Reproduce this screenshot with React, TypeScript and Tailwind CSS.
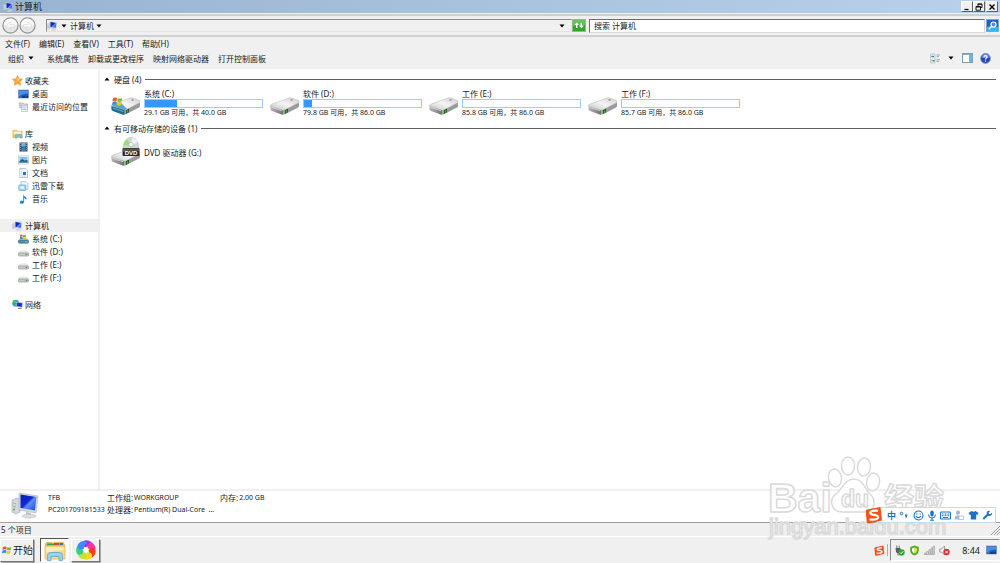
import React, { useState } from "react";

type IconProps = { className?: string };

function Caret({ className = "" }: IconProps) {
  return (
    <svg viewBox="0 0 6 4" className={`h-1 w-1.5 shrink-0 ${className}`}>
      <path d="M0.5 0.5h5L3 3.5z" fill="#000" />
    </svg>
  );
}

function WindowsFlag({ className = "" }: IconProps) {
  return (
    <svg viewBox="0 0 16 16" className={className}>
      <path d="M1.500 3.200C4 1.800 5.800 2 7.600 3L6.600 7.600C4.800 6.600 3 6.600.6 7.800z" fill="#ee5a24" />
      <path d="M8.600 3.400c2 1 4 .8 6.600-.4L14 7.600c-2.400 1.200-4.400 1.200-6.400.4z" fill="#7cbb2c" />
      <path d="M1 8.800c2.400-1.200 4.200-1.200 6-.2l-1 4.600c-1.800-1-3.800-1-6.200.2z" fill="#2f8de0" />
      <path d="M7.600 9c2 1 4 .8 6.400-.4l-1.200 4.800c-2.400 1-4.200 1-6.200 0z" fill="#fbc02d" />
    </svg>
  );
}

function ComputerIcon({ className = "" }: IconProps) {
  return (
    <svg viewBox="0 0 30 27" className={className}>
      <defs>
        <linearGradient id="screen" x1="0" y1="0" x2="1" y2="1">
          <stop offset="0" stopColor="#0a1fb8" />
          <stop offset="0.45" stopColor="#1028d0" />
          <stop offset="0.55" stopColor="#5f8ff5" />
          <stop offset="1" stopColor="#1b45dd" />
        </linearGradient>
      </defs>
      <path d="M1 8l5-2 3 1v13l-4 2-4-2z" fill="#d5d8db" stroke="#a3a8ad" strokeWidth=".6" />
      <path d="M2 11l3 1M2 14l3 1" stroke="#999" strokeWidth=".7" />
      <circle cx="3" cy="17.500" r="1" fill="#4caf50" />
      <path d="M8 1l19 3-2 17-17-3z" fill="#d8dde4" stroke="#a5adb8" strokeWidth=".6" />
      <path d="M9.500 2.500l16 2.500-1.600 13.600-14.400-2.600z" fill="url(#screen)" />
      <path d="M15 20l5 1v2.500l-5-1z" fill="#b9bec3" />
      <ellipse cx="18" cy="24.200" rx="7" ry="1.900" fill="#dcdfe1" stroke="#b2b6ba" strokeWidth=".5" />
    </svg>
  );
}

function DriveBody() {
  return (
    <>
      <defs>
        <linearGradient id="driveTop" x1="0" y1="1" x2="1" y2="0">
          <stop offset="0" stopColor="#c4c4c4" />
          <stop offset=".5" stopColor="#f4f4f4" />
          <stop offset="1" stopColor="#cfcfcf" />
        </linearGradient>
        <linearGradient id="driveFront" x1="0" y1="0" x2="1" y2="0">
          <stop offset="0" stopColor="#b5b5b5" />
          <stop offset=".6" stopColor="#8c8c8c" />
          <stop offset="1" stopColor="#6d6d6d" />
        </linearGradient>
      </defs>
      <path d="M.5 10.500l13 4.500v4.500q-1 .3-2 0L2 16q-1.500-.5-1.500-2z" fill="url(#driveFront)" />
      <path d="M13.500 15L29 7.500v3.500q0 1-1 1.600L15 19.300q-.8.300-1.500.2z" fill="#9b9b9b" />
      <path d="M.5 10.500q0-.8 1-1.200L19 3q1.500-.5 3 0l6.500 2.600q1.200.9 0 1.900L15.500 14.600q-1.500.8-3 .3L1.500 11.500q-1-.3-1-1z" fill="url(#driveTop)" stroke="#b4b4b4" strokeWidth=".5" />
      <path d="M21.500 4.200l2 .8-2 .7-1.800-.8z" fill="#8a8a8a" />
      <path d="M1.200 12.200l11 3.600" stroke="#e9e9e9" strokeWidth=".7" />
      <path d="M15 15.200l3-1.500v3.600l-3 1.500z" fill="#174b14" />
      <path d="M15.700 15.800l1.600-.8v2.200l-1.600.8z" fill="#3bbf28" />
    </>
  );
}

function DriveIcon({ system, className = "" }: IconProps & { system?: boolean }) {
  return (
    <svg viewBox="0 0 30 21" className={className}>
      <DriveBody />
      {system && (
        <>
          <path d="M.5 11l13 4v4.500q-1 .3-2 0L2 16q-1.500-.5-1.500-2z" fill="#1d6d92" />
          <path d="M1 10.500L9 7l7 7-2.500 1z" fill="#58a5c4" />
          <path d="M1.800 13l10.500 3.500" stroke="#8fd0e6" strokeWidth=".7" />
          <g transform="translate(1 1) scale(.68)">
            <path d="M1.500 3.200C4 1.800 5.800 2 7.600 3L6.600 7.600C4.800 6.600 3 6.600.6 7.800z" fill="#ee5a24" />
            <path d="M8.600 3.400c2 1 4 .8 6.600-.4L14 7.600c-2.400 1.200-4.400 1.200-6.400.4z" fill="#7cbb2c" />
            <path d="M1 8.800c2.400-1.200 4.200-1.200 6-.2l-1 4.600c-1.800-1-3.800-1-6.200.2z" fill="#2f8de0" />
            <path d="M8 9c2 1 4 .8 6.400-.4l-1.200 4.800c-2.400 1-4.200 1-6.200 0z" fill="#fbc02d" />
          </g>
        </>
      )}
    </svg>
  );
}

function DvdIcon() {
  return (
    <svg viewBox="0 0 30 30" className="h-[30px] w-[30px] shrink-0">
      <g transform="translate(0 9)">
        <DriveBody />
      </g>
      <path d="M12 14C12 5 15 .5 20 .5S28 5 28 14z" fill="#d3d6d6" stroke="#b9bcbc" strokeWidth=".6" />
      <path d="M20 9L12.500 8q1-4 3.500-5.500z" fill="#8fe36d" />
      <path d="M20 9l1-8q3.500.5 5.500 4z" fill="#f3f3f3" />
      <circle cx="20" cy="7.500" r="2.200" fill="#fff" stroke="#aaa" strokeWidth=".6" />
      <rect x="11.500" y="11" width="17" height="8" rx="1" fill="#2b2b2b" />
      <path d="M12 11.500h16v2.500q-8-1-16 1z" fill="#555" />
      <text x="20" y="17.600" fontSize="6" fontWeight="700" fontFamily="Liberation Sans, sans-serif" textAnchor="middle" fill="#fff">DVD</text>
    </svg>
  );
}

function SmallDrive() {
  return (
    <svg viewBox="0 0 11 10" className="h-2.5 w-[11px]">
      <path d="M2.500 4h6L10.500 6H.5z" fill="#f2f2f2" stroke="#c5c5c5" strokeWidth=".5" />
      <rect x=".5" y="6" width="10" height="3" rx=".8" fill="#c9c9c9" stroke="#8b8b8b" strokeWidth=".6" />
      <path d="M7.500 7.500h1.800" stroke="#2bb52b" strokeWidth="1" />
    </svg>
  );
}

function SmallSystemDrive() {
  return (
    <svg viewBox="0 0 11 10" className="h-2.5 w-[11px]">
      <path d="M2.500 3.500h6L10.500 6H.5z" fill="#b5dbe8" />
      <rect x=".5" y="6" width="10" height="3.200" rx=".8" fill="#4a90a8" stroke="#49646e" strokeWidth=".6" />
      <path d="M2 .8q1.400-.8 2.600 0v2q-1.200-.6-2.600 0z" fill="#ee5a24" />
      <path d="M5 1q1.400.6 2.800-.2v2q-1.400.8-2.800.2z" fill="#6fb52a" />
      <path d="M2 3.200q1.400-.8 2.600 0v2q-1.200-.6-2.600 0z" fill="#2f8de0" />
      <path d="M5 3.400q1.400.6 2.800-.2v2q-1.400.8-2.800.2z" fill="#fbb91d" />
      <path d="M7.500 7.700h1.800" stroke="#7bf04e" strokeWidth="1" />
    </svg>
  );
}

function StarIcon() {
  return (
    <svg viewBox="0 0 12 12" className="h-[11px] w-[11px]">
      <path d="M6 .6l1.600 3.500 3.900.5-2.800 2.700.7 3.900L6 9.300l-3.400 1.900.7-3.900L.5 4.600l3.900-.5z" fill="#fba93a" stroke="#e0862a" strokeWidth=".6" />
      <path d="M6 2.500l1 2.200 2 .4-3 1.200z" fill="#ffe08a" />
    </svg>
  );
}

function DesktopIcon({ className = "h-2.5 w-[11px]" }: IconProps) {
  return (
    <svg viewBox="0 0 11 10" className={className}>
      <rect x=".5" y="1" width="10" height="8" fill="#1c56b5" stroke="#6d8db5" strokeWidth=".7" />
      <path d="M1 1.400h9v3q-5 0-9 3z" fill="#4b8ce4" />
      <path d="M1 8h9" stroke="#0d2f6e" strokeWidth="1.200" />
      <path d="M1.500 8h2" stroke="#7fd1f2" strokeWidth=".8" />
    </svg>
  );
}

function RecentIcon() {
  return (
    <svg viewBox="0 0 11 10" className="h-2.5 w-[11px]">
      <path d="M1 1h4l1 1h3.500v4H2z" fill="#d6dade" stroke="#9aa0a6" strokeWidth=".6" />
      <path d="M3.500 4h6v5.500h-6z" fill="#f2f5f8" stroke="#a7b1ba" strokeWidth=".6" />
      <path d="M4.500 6h4M4.500 7.500h4" stroke="#7ba5cc" strokeWidth=".6" />
      <circle cx="3" cy="3.500" r="1.500" fill="#b7cbdd" />
    </svg>
  );
}

function LibraryIcon() {
  return (
    <svg viewBox="0 0 12 11" className="h-[11px] w-[11px]">
      <path d="M1 2h4l1 1h5v7H1z" fill="#f3d36e" stroke="#cfa945" strokeWidth=".6" />
      <path d="M2 3.500h8V6H2z" fill="#fff5c9" />
      <path d="M3.500 10.500V8q0-1.500 1.500-1.500h4.500q1.500 0 1.500 1.500v2.500H9V8.500H5.500v2z" fill="#7fc4e2" stroke="#4c9abc" strokeWidth=".5" />
    </svg>
  );
}

function VideoIcon() {
  return (
    <svg viewBox="0 0 11 10" className="h-2.5 w-[11px]">
      <rect x="1.500" y=".5" width="8" height="9" fill="#3f4a55" />
      <rect x="3.300" y="1" width="4.400" height="3.600" fill="#67b6e6" />
      <rect x="3.300" y="5.400" width="4.400" height="3.600" fill="#3a83c3" />
      <path d="M2.400 1v8M8.600 1v8" stroke="#dbe3ea" strokeWidth=".5" strokeDasharray="1 1" />
    </svg>
  );
}

function PictureIcon() {
  return (
    <svg viewBox="0 0 11 10" className="h-2.5 w-[11px]">
      <rect x=".5" y="1" width="10" height="8" fill="#fff" stroke="#a9b2ba" strokeWidth=".6" />
      <rect x="1.500" y="2" width="8" height="6" fill="#79c3ec" />
      <path d="M1.500 6l3-2 2 1.500L9.500 5v3h-8z" fill="#1d5f8c" />
      <path d="M1.500 7q4-1 8 0v1h-8z" fill="#4fa386" />
    </svg>
  );
}

function DocumentIcon() {
  return (
    <svg viewBox="0 0 11 10" className="h-2.5 w-[11px]">
      <path d="M1.800.5h5.700l2 2v7H1.800z" fill="#fafcfe" stroke="#9fb0c0" strokeWidth=".7" />
      <path d="M3 2h2M3 4h1M3 6h1M3 8h5" stroke="#aebdcb" strokeWidth=".6" />
      <rect x="5" y="4" width="3" height="3" fill="#2f6fd0" />
    </svg>
  );
}

function DownloadIcon() {
  return (
    <svg viewBox="0 0 11 10" className="h-2.5 w-[11px]">
      <path d="M3 .5h5l2 2v6H3z" fill="#e8f3fb" stroke="#8fb4d0" strokeWidth=".6" />
      <rect x=".8" y="4" width="7" height="5.500" rx=".6" fill="#a5d3ee" stroke="#5e9cc4" strokeWidth=".6" />
      <path d="M2.500 5.500h3.500v2H2.500z" fill="#fff" />
    </svg>
  );
}

function MusicIcon() {
  return (
    <svg viewBox="0 0 11 10" className="h-2.5 w-[11px]">
      <path d="M5.200.3q.4 2 2.600 2.800 1.600 1.200.2 3.200.2-1.800-1.900-2.400v4q-.3 1.800-2.400 1.900-2 0-2-1.400 0-1.700 2-1.800.8 0 1.500.3z" fill="#1e88d8" />
    </svg>
  );
}

function NetworkIcon() {
  return (
    <svg viewBox="0 0 12 11" className="h-[11px] w-[11px]">
      <circle cx="4" cy="4" r="3.700" fill="#2a9bd8" />
      <path d="M1 2.500q2-2.500 4-1.500L4.500 3 2 4.500zM3 5l2 .8-1 1.800Q2 7 3 5z" fill="#57c04a" />
      <path d="M5 3l6.500.8-.5 4.700-6-.8z" fill="#152fc4" stroke="#c3c9d6" strokeWidth=".7" />
      <path d="M6.500 9.800h4" stroke="#888" strokeWidth="1.200" />
    </svg>
  );
}

function SogouIcon({ className = "" }: IconProps) {
  return (
    <svg viewBox="0 0 18 18" className={className}>
      <path d="M2 3.500L15.500 1l1.500 13.500L4 17.500q-2 .2-2.400-2L.8 5.500Q.8 4 2 3.500z" fill="#f4511e" />
      <path d="M13 4.800Q6 4.200 5.200 6.500 5 8.300 9 8.900q4.500.6 4.200 2.600-.8 2.600-8.700 2" fill="none" stroke="#fff" strokeWidth="2.200" />
    </svg>
  );
}

const favorites = [
  { label: "桌面", icon: <DesktopIcon /> },
  { label: "最近访问的位置", icon: <RecentIcon /> },
];

const libraries = [
  { label: "视频", icon: <VideoIcon /> },
  { label: "图片", icon: <PictureIcon /> },
  { label: "文档", icon: <DocumentIcon /> },
  { label: "迅雷下载", icon: <DownloadIcon /> },
  { label: "音乐", icon: <MusicIcon /> },
];

const computerItems = [
  { label: "系统 (C:)", icon: <SmallSystemDrive /> },
  { label: "软件 (D:)", icon: <SmallDrive /> },
  { label: "工作 (E:)", icon: <SmallDrive /> },
  { label: "工作 (F:)", icon: <SmallDrive /> },
];

const drives = [
  { name: "系统 (C:)", info: "29.1 GB 可用，共 40.0 GB", used: 27, system: true },
  { name: "软件 (D:)", info: "79.8 GB 可用，共 86.0 GB", used: 7 },
  { name: "工作 (E:)", info: "85.8 GB 可用，共 86.0 GB", used: 0 },
  { name: "工作 (F:)", info: "85.7 GB 可用，共 86.0 GB", used: 0 },
];

const menus = ["文件(F)", "编辑(E)", "查看(V)", "工具(T)", "帮助(H)"];
const commands = ["系统属性", "卸载或更改程序", "映射网络驱动器", "打开控制面板"];

function TreeGroup({
  title,
  icon,
  items = [],
  active,
}: {
  title: string;
  icon: React.ReactNode;
  items?: { label: string; icon: React.ReactNode }[];
  active?: boolean;
}) {
  return (
    <ul>
      <li>
        <a href="#" className={`flex h-[13px] items-center gap-0.5 pl-3 ${active ? "bg-[#f0f0f0]" : ""}`}>
          {icon}
          {title}
        </a>
      </li>
      {items.map((item) => (
        <li key={item.label}>
          <a href="#" className="flex h-[13px] items-center gap-[3px] pl-[18px]">
            {item.icon}
            {item.label}
          </a>
        </li>
      ))}
    </ul>
  );
}

function GroupHeader({ title }: { title: string }) {
  return (
    <h2 className="flex h-3 items-center gap-1 pr-1">
      <svg viewBox="0 0 6 4" className="h-1 w-1.5">
        <path d="M.5 3.500h5L3 .5z" fill="#000" />
      </svg>
      <span>{title}</span>
      <span className="h-px flex-1 bg-[#606060]" />
    </h2>
  );
}

function TitleBar() {
  const button =
    "flex h-[11px] w-3 items-center justify-center border border-t-white border-l-white border-r-[#606060] border-b-[#606060] bg-[#f0f0f0]";
  return (
    <header className="flex h-[13px] items-center bg-linear-to-r from-[#99b4d1] to-[#b9d1ea] pl-[3px] pr-0.5">
      <ComputerIcon className="h-2.5 w-[11px]" />
      <h1 className="flex-1 pl-px text-[9px]">计算机</h1>
      <button className={button} aria-label="最小化">
        <svg viewBox="0 0 8 8" className="h-2 w-2"><path d="M1.500 6.500h4" stroke="#000" strokeWidth="1.300" /></svg>
      </button>
      <button className={button} aria-label="还原">
        <svg viewBox="0 0 8 8" className="h-2 w-2">
          <path d="M3 3V1h4v3.500H5.500M2.500 1.200H7" fill="none" stroke="#000" strokeWidth=".9" />
          <path d="M1 3.500h4.500v3.700H1zM1 4h4.500" fill="none" stroke="#000" strokeWidth=".9" />
        </svg>
      </button>
      <button className={`${button} ml-px`} aria-label="关闭">
        <svg viewBox="0 0 8 8" className="h-2 w-2"><path d="M1.500 1.500l5 5M6.500 1.500l-5 5" stroke="#000" strokeWidth="1.400" /></svg>
      </button>
    </header>
  );
}

function NavButton({ label, flip }: { label: string; flip?: boolean }) {
  return (
    <button aria-label={label}>
      <svg viewBox="0 0 17 17" className={`h-[17px] w-[17px] ${flip ? "-scale-x-100" : ""}`}>
        <circle cx="8.500" cy="8.500" r="7.600" fill="#e6e6e6" stroke="#949494" strokeWidth="1.200" />
        <path d="M2 8a6.500 6.500 0 0113 0q-6 2-13 0z" fill="#fafafa" />
        <path d="M12.500 7.500H8V5L4 8.700 8 12.300V10h4.500z" fill="#f8f8f8" stroke="#d4d4d4" strokeWidth=".6" />
      </svg>
    </button>
  );
}

function AddressRow({ search, onSearch }: { search: string; onSearch: (v: string) => void }) {
  return (
    <div className="mt-px flex h-[23px] items-center border-y-2 border-y-[#cfcfcf] bg-[#f0f0f0] pl-0.5 pr-px">
      <NavButton label="后退" />
      <NavButton label="前进" flip />
      <div className="ml-2.5 flex h-[13px] flex-1 items-center border border-[#e3e3e3] border-t-[#8c8c8c] border-l-[#8c8c8c]">
        <ComputerIcon className="h-2.5 w-[11px]" />
        <Caret className="ml-[3px] mr-[3px]" />
        <button className="flex items-center gap-0.5">
          计算机
          <Caret />
        </button>
        <button className="ml-auto mr-1.5" aria-label="以前的位置"><Caret /></button>
      </div>
      <button aria-label="刷新">
        <svg viewBox="0 0 14 13" className="h-[13px] w-3.5">
          <rect x=".5" y=".5" width="13" height="12" fill="#33a52d" stroke="#91bb8d" />
          <path d="M1 1h12v5q-6-1-12 1z" fill="#63c558" />
          <path d="M2.500 6L4.700 3.500 7 6H5.500v3H4V6zM7 6.500h1.500V4h1.500v2.500h1.800L9.500 9.500z" fill="#fff" />
        </svg>
      </button>
      <input
        type="search"
        aria-label="搜索 计算机"
        placeholder="搜索 计算机"
        value={search}
        onChange={(e) => onSearch(e.target.value)}
        className="ml-[3px] h-3.5 w-[396px] border border-[#d8d8d8] border-t-[#6d6d6d] border-l-[#6d6d6d] bg-white pl-1 outline-none placeholder:text-[#222]"
      />
      <button className="ml-px" aria-label="搜索">
        <svg viewBox="0 0 13 13" className="h-[13px] w-[13px]">
          <rect x=".5" y=".5" width="12" height="12" fill="#1d61c8" stroke="#7ea6da" />
          <path d="M1 8q6-2 11 0v4H1z" fill="#35b5ee" />
          <circle cx="7.500" cy="5.500" r="2.500" fill="#4e8ae4" stroke="#fff" strokeWidth="1.200" />
          <path d="M5.700 7.300L3 10" stroke="#fff" strokeWidth="1.500" />
        </svg>
      </button>
    </div>
  );
}

function Toolbar() {
  return (
    <div className="flex h-[18px] items-center gap-[9px] px-2">
      <button className="mr-1 flex items-center gap-1">
        组织
        <Caret />
      </button>
      {commands.map((c) => (
        <button key={c}>{c}</button>
      ))}
      <div className="ml-auto flex items-center pr-px">
        <button className="flex items-center gap-[7px]" aria-label="更改您的视图">
          <svg viewBox="0 0 11 11" className="h-[11px] w-[11px]">
            <path d="M.5 1h4.500v9H.500z" fill="#dfeef8" stroke="#9db6c9" strokeWidth=".6" />
            <path d="M1.500 3.500h2.500" stroke="#347fb4" strokeWidth="1.300" />
            <path d="M1.500 7.500h1.300" stroke="#e0a91b" strokeWidth="1.500" />
            <path d="M2.800 7.800H4.500" stroke="#3b9447" strokeWidth="1.500" />
            <path d="M6.500 2H10M6.500 3.700H9M6.500 6.700H10M6.500 8.400H9" stroke="#8a8f94" strokeWidth=".8" />
          </svg>
          <Caret />
        </button>
        <button className="ml-2" aria-label="显示预览窗格">
          <svg viewBox="0 0 11 10" className="h-2.5 w-[11px]">
            <rect x=".5" y=".5" width="10" height="9" fill="#fff" stroke="#7f9ab3" />
            <rect x="7" y="1" width="3.200" height="8" fill="#67b9df" />
            <path d="M1 1.500h9" stroke="#8fa9bf" />
          </svg>
        </button>
        <button className="ml-[7px]" aria-label="获取帮助">
          <svg viewBox="0 0 11 11" className="h-[11px] w-[11px]">
            <circle cx="5.500" cy="5.500" r="4.900" fill="#2347b5" stroke="#8a94a8" strokeWidth=".8" />
            <path d="M1.500 4.500a4 4 0 018 0q-4 1-8 0z" fill="#5f86e0" />
            <path d="M4 4.200q0-1.500 1.500-1.500T7 4.100q0 .8-.8 1.200-.7.300-.7 1.200M5.500 7.500v1.200" fill="none" stroke="#fff" strokeWidth="1.200" />
          </svg>
        </button>
      </div>
    </div>
  );
}

function DriveTile({ drive }: { drive: (typeof drives)[number] }) {
  return (
    <a href="#" className="flex gap-[3px]">
      <DriveIcon system={drive.system} className="mt-[7px] h-[21px] w-[30px] shrink-0" />
      <div className="w-[119px]">
        <p className="leading-[11px]">{drive.name}</p>
        <div className="h-[9px] border border-[#99ccff] bg-white">
          <div className="h-full bg-[#3399ff]" style={{ width: `${drive.used}%` }} />
        </div>
        <p className="whitespace-nowrap text-[7px] leading-[10px]">{drive.info}</p>
      </div>
    </a>
  );
}

function DetailsPane() {
  return (
    <section className="flex h-[33px] items-start border-t-2 border-[#f0f0f0] bg-white pl-[11px] pt-px text-[7px] leading-3">
      <ComputerIcon className="h-[27px] w-[30px]" />
      <div className="ml-[7px] w-[59px]">
        <p>TFB</p>
        <p>PC201709181533</p>
      </div>
      <dl className="grid w-[113px] grid-cols-[27px_1fr] whitespace-nowrap">
        <dt className="text-[8px]">工作组:</dt>
        <dd>WORKGROUP</dd>
        <dt className="text-[8px]">处理器:</dt>
        <dd>Pentium(R) Dual-Core &nbsp;...</dd>
      </dl>
      <dl className="flex gap-px">
        <dt className="text-[8px]">内存:</dt>
        <dd>2.00 GB</dd>
      </dl>
    </section>
  );
}

function Watermark() {
  return (
    <svg
      viewBox="0 0 190 90"
      className="pointer-events-none absolute bottom-[18px] right-[47px] h-[90px] w-[190px]"
      fill="#fff"
      fillOpacity=".75"
      stroke="#dadada"
      strokeWidth="1.500"
      strokeLinejoin="round"
      fontFamily="Liberation Sans, Noto Sans CJK SC, sans-serif"
      aria-hidden="true"
    >
      <text x="5" y="57" fontSize="41" fontWeight="700">Bai</text>
      <ellipse cx="72" cy="23" rx="6.500" ry="9" transform="rotate(-10 72 23)" />
      <ellipse cx="85" cy="11" rx="6.500" ry="9" />
      <ellipse cx="101" cy="12" rx="6.500" ry="9" transform="rotate(6 101 12)" />
      <ellipse cx="110" cy="27" rx="6.500" ry="9" transform="rotate(10 110 27)" />
      <path d="M91 24c9 0 10 9 16 15 6 5 6 18-5 18H80C67 57 66 44 73 39c7-6 9-15 18-15z" />
      <text x="78" y="52" fontSize="23" fontWeight="700">du</text>
      <text x="121" y="54" fontSize="30" fontWeight="700">经验</text>
      <text x="6" y="79" fontSize="22">jingyan.baidu.com</text>
    </svg>
  );
}

function ImeBar() {
  return (
    <div className="absolute bottom-10 right-1 flex h-4 w-[118px] items-center justify-between border border-[#c3dcef] bg-white pl-2 pr-0.5 text-[#1a73c7]">
      <SogouIcon className="absolute -left-3.5 -top-0.5 h-[18px] w-[18px]" />
      <button className="text-[9px] font-bold leading-[9px]">中</button>
      <button aria-label="标点">
        <svg viewBox="0 0 10 10" className="h-2.5 w-2.5">
          <circle cx="2.500" cy="3.500" r="1.300" fill="none" stroke="currentColor" />
          <path d="M6 4.500h2.300q.5 2.500-2 4 .8-1.300.7-2H6z" fill="currentColor" />
        </svg>
      </button>
      <button aria-label="表情">
        <svg viewBox="0 0 12 12" className="h-[11px] w-[11px]" fill="none" stroke="currentColor" strokeWidth="1.200">
          <circle cx="6" cy="6" r="4.900" />
          <path d="M4.200 3.500v1.500M7.800 3.500v1.500M3.300 6.800q2.700 3 5.400 0" />
        </svg>
      </button>
      <button aria-label="语音">
        <svg viewBox="0 0 10 11" className="h-[11px] w-2.5">
          <rect x="3.300" y=".5" width="3.400" height="6" rx="1.700" fill="currentColor" />
          <path d="M1.500 4.500q0 3.500 3.500 3.500t3.500-3.500M5 8v2.500M3 10.200h4" fill="none" stroke="currentColor" />
        </svg>
      </button>
      <button aria-label="软键盘">
        <svg viewBox="0 0 11 9" className="h-[9px] w-[11px]">
          <rect x=".6" y="1" width="9.800" height="7" rx=".6" fill="none" stroke="currentColor" strokeWidth="1.100" />
          <path d="M2 3h7M2 4.700h7" stroke="currentColor" strokeWidth="1" strokeDasharray="1 .5" />
          <path d="M3 6.500h5" stroke="currentColor" strokeWidth=".9" />
        </svg>
      </button>
      <button aria-label="账户">
        <svg viewBox="0 0 10 10" className="h-2.5 w-2.5" fill="#a9b8c8">
          <circle cx="4" cy="2.700" r="2.100" />
          <path d="M.5 9.500q0-4.300 3.500-4.300l1.500.3v4z" />
          <rect x="5" y="6" width="4.500" height="3.500" fill="#fff" stroke="#a9b8c8" strokeWidth=".8" />
        </svg>
      </button>
      <button aria-label="皮肤">
        <svg viewBox="0 0 11 10" className="h-2.5 w-[11px]">
          <path d="M3.500 1q2 1.500 4 0L10.500 3 9.300 5 8.200 4.500V9.500H2.800V4.500L1.700 5 .5 3z" fill="currentColor" />
        </svg>
      </button>
      <button aria-label="工具箱">
        <svg viewBox="0 0 11 10" className="h-2.5 w-[11px]">
          <path d="M10 2.800L8.300 4.300 6.900 3.900 6.600 2.500 8.200.9Q5.800.200 4.900 2.100q-.5 1 0 2L.8 8q-.2 1.500 1.400 1.500L6.200 5.800Q9 6.500 10 4.500q.300-.9 0-1.700z" fill="currentColor" />
        </svg>
      </button>
    </div>
  );
}

function FolderIcon() {
  return (
    <svg viewBox="0 0 22 21" className="h-[21px] w-[22px]">
      <path d="M1 4l1.500-2H8l1.500 2V2h10l1.500 3v14H1z" fill="#e6bc55" />
      <path d="M3 3.500h7V5H3z" fill="#37a04a" />
      <path d="M10 3h5v2h-5z" fill="#d9463a" />
      <path d="M15.500 3H19v2h-3.500z" fill="#357ac7" />
      <path d="M1 6h20v13H1z" fill="#f8dc8b" stroke="#d8af52" strokeWidth=".6" />
      <path d="M2 7h18v3q-9 0-18 3z" fill="#fdeeb7" />
      <path d="M3.500 20.500v-5q0-3 3-3h9q3 0 3 3v5H15v-4H7v4z" fill="#9bd2ec" stroke="#5aa5ca" strokeWidth=".8" />
    </svg>
  );
}

const petals = ["#a531f0", "#f5369b", "#fb3b1c", "#fbd91c", "#c8e032", "#2fd08a", "#3d8cf5"];

function PinwheelIcon() {
  return (
    <svg viewBox="-11 -11 22 22" className="h-[22px] w-[22px]">
      {petals.map((color, i) => (
        <path
          key={color}
          d="M0-2.500C-5-4-4-9.500 0-9.800 5-10 8-6 5.500-3 4-4.500 2-4.500 0-2.500z"
          fill={color}
          transform={`rotate(${(i * 360) / petals.length})`}
        />
      ))}
      <circle r="2.500" fill="#fff" />
    </svg>
  );
}

function Tray() {
  return (
    <div className="ml-auto flex items-center">
      <SogouIcon className="h-[11px] w-[11px]" />
      <span className="ml-0.5 h-3 w-px bg-[#b0b0b0]" />
      <div className="ml-0.5 flex h-[22px] items-center border border-t-[#8b8b8b] border-l-[#8b8b8b] border-r-transparent border-b-white pl-[3px] pr-0.5">
        <div className="flex items-center gap-1">
          <svg viewBox="0 0 11 11" className="h-[11px] w-[11px]">
            <path d="M1.500 3h5v3.500q-.5 2-2 2t-2.500-1.500z" fill="#5a5f63" />
            <path d="M2.800.5V3M5.200.5V3M4 8.500v2" stroke="#777" />
            <circle cx="7.500" cy="7.500" r="3.200" fill="#2da532" />
            <path d="M6 7.500l1.200 1.200L9.200 6.300" fill="none" stroke="#fff" />
          </svg>
          <svg viewBox="0 0 11 11" className="h-[11px] w-[11px]">
            <path d="M5.500.5L9.800 2v3.500q0 3.500-4.300 5-4.300-1.500-4.300-5V2z" fill="#4fae1f" />
            <path d="M5.500 2.500L8 3.400v2q0 2-2.500 3.200z" fill="#f3e13a" />
            <path d="M5.500 2.500L3 3.400v2q0 2 2.500 3.200z" fill="#fff" />
          </svg>
          <svg viewBox="0 0 11 11" className="h-[11px] w-[11px]" fill="#e4e4e4" stroke="#929292" strokeWidth=".6">
            <path d="M.5 8h1.700v1.500H.500zM2.700 6.500h1.700v3H2.700zM4.900 4.800h1.700v4.700H4.900zM7 3h1.500v6.500H7zM9 1.300h1.500v8.200H9z" />
          </svg>
          <svg viewBox="0 0 11 11" className="h-[11px] w-[11px]">
            <path d="M.7 4h1.800L5.500 1v9L2.500 7H.7z" fill="#f1f1f1" stroke="#8c8c8c" strokeWidth=".8" />
            <circle cx="7.500" cy="7" r="3.200" fill="#d93232" />
            <path d="M6.300 5.800l2.400 2.400M8.700 5.800L6.300 8.200" stroke="#fff" />
          </svg>
        </div>
        <time className="ml-3 text-[9px]">8:44</time>
        <button className="ml-1.5" aria-label="显示桌面"><DesktopIcon className="h-2.5 w-[11px]" /></button>
      </div>
    </div>
  );
}

function Taskbar() {
  const raised = "border border-t-white border-l-white border-r-[#747474] border-b-[#747474] shadow-[1px_1px_0_#a9a9a9]";
  return (
    <footer className="flex h-[27px] items-center border-t border-white bg-[#f0f0f0]">
      <button className={`flex h-[23px] w-[34px] items-center gap-px whitespace-nowrap pl-px text-[10px] ${raised}`}>
        <WindowsFlag className="h-2.5 w-2.5 shrink-0" />
        开始
      </button>
      <button
        aria-label="资源管理器"
        className="ml-1.5 flex h-6 w-[29px] items-center justify-center border border-t-[#555] border-l-[#555] border-r-white border-b-white bg-[#fafafa]"
      >
        <FolderIcon />
      </button>
      <button aria-label="浏览器" className={`ml-0.5 flex h-[23px] w-[29px] items-center justify-center ${raised}`}>
        <PinwheelIcon />
      </button>
      <Tray />
    </footer>
  );
}

export default function App() {
  const [search, setSearch] = useState("");

  return (
    <div className="relative flex min-h-screen flex-col bg-[#f0f0f0] font-['Noto_Sans','Noto_Sans_CJK_SC',sans-serif] text-[8px] leading-[13px] text-[#1a1a1a]">
      <TitleBar />
      <AddressRow search={search} onSearch={setSearch} />
      <nav className="flex h-3 items-center gap-[9px] pl-[5px]">
        {menus.map((m) => (
          <button key={m}>{m}</button>
        ))}
      </nav>
      <Toolbar />

      <main className="mt-0.5 flex flex-1 bg-white">
        <aside className="flex w-[100px] shrink-0 flex-col gap-3.5 border-r-2 border-[#f0f0f0] pt-[5px]">
          <TreeGroup title="收藏夹" icon={<StarIcon />} items={favorites} />
          <TreeGroup title="库" icon={<LibraryIcon />} items={libraries} />
          <TreeGroup title="计算机" icon={<ComputerIcon className="h-2.5 w-[11px]" />} items={computerItems} active />
          <TreeGroup title="网络" icon={<NetworkIcon />} />
        </aside>
        <div className="flex-1 pl-1 pt-1">
          <GroupHeader title="硬盘 (4)" />
          <div className="mb-1 mt-[3px] grid grid-cols-[repeat(auto-fill,159px)] pl-[7px]">
            {drives.map((d) => (
              <DriveTile key={d.name} drive={d} />
            ))}
          </div>
          <GroupHeader title="有可移动存储的设备 (1)" />
          <a href="#" className="mt-[3px] flex items-center gap-[3px] pl-[7px]">
            <DvdIcon />
            DVD 驱动器 (G:)
          </a>
        </div>
      </main>

      <DetailsPane />
      <div className="flex h-3.5 items-center justify-between border-t border-[#a0a0a0]">
        <span className="pl-px leading-3">5 个项目</span>
        <svg viewBox="0 0 10 10" className="h-2.5 w-2.5">
          <path d="M1 10l9-9M4 10l6-6M7 10l3-3" stroke="#9a9a9a" strokeWidth="1" />
        </svg>
      </div>
      <Taskbar />
      <Watermark />
      <ImeBar />
    </div>
  );
}
